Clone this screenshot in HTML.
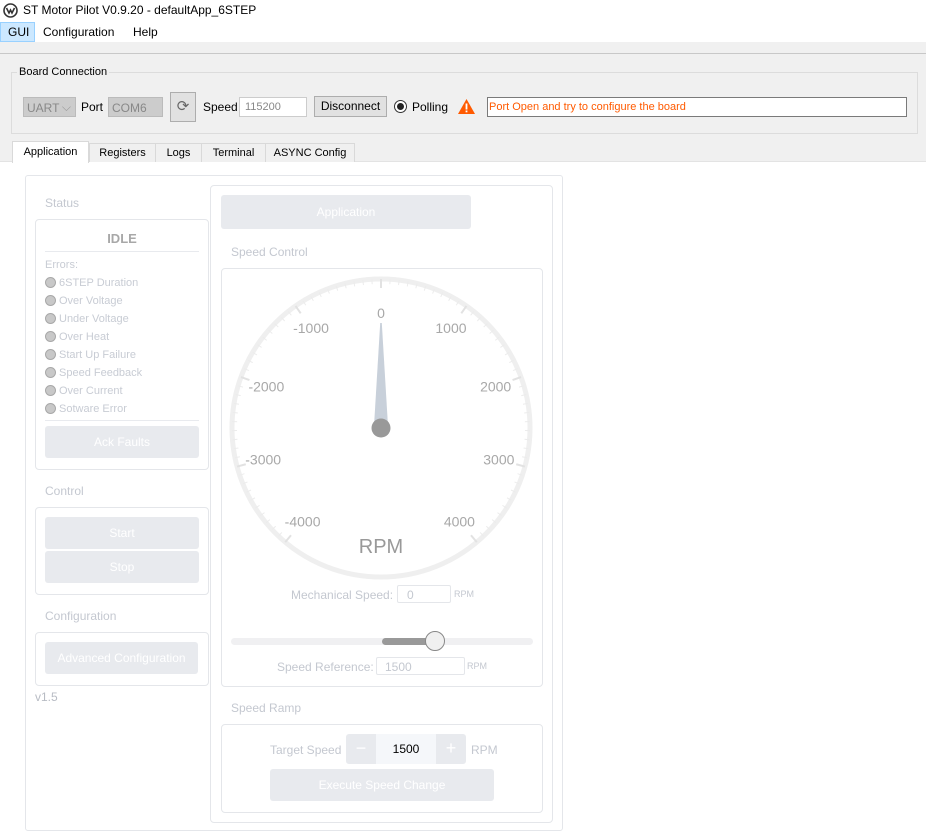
<!DOCTYPE html>
<html><head><meta charset="utf-8">
<style>
*{box-sizing:border-box;margin:0;padding:0}
body{width:926px;height:840px;position:relative;overflow:hidden;background:#f0f0f0;font-family:"Liberation Sans",sans-serif;font-size:12px;color:#000}
.a{position:absolute}
.btnf{position:absolute;background:#e8eaee;border-radius:3px;color:#fff;text-align:center;font-size:12px}
.box{position:absolute;border:1px solid #e4e6ea;border-radius:4px;background:#fff}
.lbl{position:absolute;color:#c4c8d0;font-size:12px}
.err{position:absolute;left:45px;color:#c8ccd4;font-size:11px}
.err i{display:inline-block;width:11px;height:11px;border-radius:50%;background:#c8c8c8;border:1px solid #a8a8a8;vertical-align:-2px;margin-right:3px}
.tab{position:absolute;top:143px;height:19px;border:1px solid #d9d9d9;border-bottom:none;background:#f0f0f0;font-size:11px;text-align:center;line-height:18px}
</style></head><body>
<div class="a" style="left:0;top:0;width:926px;height:22px;background:#fff"></div>
<svg class="a" style="left:3px;top:3px" width="15" height="15" viewBox="0 0 15 15"><circle cx="7.5" cy="7.5" r="6.5" fill="none" stroke="#333" stroke-width="1.6"/><path d="M3.5 5 L6 10 L7.5 7 L9 10 L11.5 5" fill="none" stroke="#333" stroke-width="1.6"/></svg>
<div class="a" style="left:23px;top:3px;font-size:12px">ST Motor Pilot V0.9.20 - defaultApp_6STEP</div>
<div class="a" style="left:0;top:22px;width:926px;height:20px;background:#fff"></div>
<div class="a" style="left:0;top:22px;width:35px;height:20px;background:#cce8ff;border:1px solid #99d1ff"></div>
<div class="a" style="left:8px;top:25px">GUI</div>
<div class="a" style="left:43px;top:25px">Configuration</div>
<div class="a" style="left:133px;top:25px">Help</div>
<div class="a" style="left:0;top:53px;width:926px;height:1px;background:#c8c8c8"></div>
<div class="a" style="left:11px;top:72px;width:907px;height:62px;border:1px solid #dcdcdc"></div>
<div class="a" style="left:17px;top:66px;background:#f0f0f0;padding:0 2px;font-size:11px">Board Connection</div>
<div class="a" style="left:23px;top:97px;width:53px;height:20px;background:#ccc;border:1px solid #bbb;color:#888;padding:3px 0 0 3px">UART <span style="position:absolute;right:4px;top:2px;color:#999">⌵</span></div>
<div class="a" style="left:81px;top:100px">Port</div>
<div class="a" style="left:108px;top:97px;width:55px;height:20px;background:#ccc;border:1px solid #bbb;color:#888;padding:3px 0 0 3px">COM6</div>
<div class="a" style="left:170px;top:92px;width:26px;height:30px;background:#e1e1e1;border:1px solid #adadad;color:#666;text-align:center;line-height:28px;font-size:15px">⟳</div>
<div class="a" style="left:203px;top:100px">Speed</div>
<div class="a" style="left:239px;top:97px;width:68px;height:20px;background:#fff;border:1px solid #ccc;color:#888;padding:3px 0 0 5px;font-size:11px">115200</div>
<div class="a" style="left:314px;top:96px;width:73px;height:21px;background:#e1e1e1;border:1px solid #adadad;text-align:center;line-height:19px">Disconnect</div>
<div class="a" style="left:394px;top:100px;width:13px;height:13px;border-radius:50%;border:1px solid #333;background:#fff"><div style="position:absolute;left:2px;top:2px;width:7px;height:7px;border-radius:50%;background:#222"></div></div>
<div class="a" style="left:412px;top:100px">Polling</div>
<svg class="a" style="left:458px;top:99px" width="17" height="15" viewBox="0 0 17 15"><path d="M8.5 0 L17 15 L0 15Z" fill="#ff5a00"/><rect x="7.6" y="4.5" width="1.8" height="6" fill="#fff"/><rect x="7.6" y="11.5" width="1.8" height="1.8" fill="#fff"/></svg>
<div class="a" style="left:487px;top:97px;width:420px;height:20px;background:#fff;border:1px solid #7a7a7a;color:#ff5a00;padding:3px 0 0 1px;font-size:11px">Port Open and try to configure the board</div>
<div class="a" style="left:0;top:161px;width:926px;height:679px;background:#fff;border-top:1px solid #e3e3e3"></div>
<div class="tab" style="left:12px;top:141px;width:77px;height:22px;background:#fff;line-height:20px">Application</div>
<div class="tab" style="left:89px;width:67px">Registers</div>
<div class="tab" style="left:155px;width:47px">Logs</div>
<div class="tab" style="left:201px;width:65px">Terminal</div>
<div class="tab" style="left:265px;width:90px">ASYNC Config</div>
<div class="a" style="left:25px;top:175px;width:538px;height:656px;border:1px solid #e4e6ea;border-radius:3px"></div>
<div class="lbl" style="left:45px;top:196px">Status</div>
<div class="box" style="left:35px;top:219px;width:174px;height:251px"></div>
<div class="a" style="left:45px;top:231px;width:154px;text-align:center;font-weight:bold;color:#a8a8a8;font-size:13px">IDLE</div>
<div class="a" style="left:45px;top:251px;width:154px;height:1px;background:#e8eaee"></div>
<div class="err" style="top:259px">Errors:</div>
<div class="err" style="top:277px"><i></i>6STEP Duration</div>
<div class="err" style="top:295px"><i></i>Over Voltage</div>
<div class="err" style="top:313px"><i></i>Under Voltage</div>
<div class="err" style="top:331px"><i></i>Over Heat</div>
<div class="err" style="top:349px"><i></i>Start Up Failure</div>
<div class="err" style="top:367px"><i></i>Speed Feedback</div>
<div class="err" style="top:385px"><i></i>Over Current</div>
<div class="err" style="top:403px"><i></i>Sotware Error</div>
<div class="a" style="left:45px;top:420px;width:154px;height:1px;background:#e8eaee"></div>
<div class="btnf" style="left:45px;top:426px;width:154px;height:32px;line-height:32px">Ack Faults</div>
<div class="lbl" style="left:45px;top:484px">Control</div>
<div class="box" style="left:35px;top:507px;width:174px;height:88px"></div>
<div class="btnf" style="left:45px;top:517px;width:154px;height:32px;line-height:32px">Start</div>
<div class="btnf" style="left:45px;top:551px;width:154px;height:32px;line-height:32px">Stop</div>
<div class="lbl" style="left:45px;top:609px">Configuration</div>
<div class="box" style="left:35px;top:632px;width:174px;height:54px"></div>
<div class="btnf" style="left:45px;top:642px;width:153px;height:32px;line-height:32px">Advanced Configuration</div>
<div class="lbl" style="left:35px;top:690px;color:#b8bcc4">v1.5</div>
<div class="box" style="left:210px;top:185px;width:343px;height:638px"></div>
<div class="btnf" style="left:221px;top:195px;width:250px;height:34px;line-height:34px">Application</div>
<div class="lbl" style="left:231px;top:245px">Speed Control</div>
<div class="box" style="left:221px;top:268px;width:322px;height:419px"></div>
<svg class="a" style="left:221px;top:268px" width="322" height="320">
<circle cx="160" cy="160" r="149" fill="none" stroke="#efefef" stroke-width="5"/>
<g id="ticks"></g>
<text x="160" y="285" text-anchor="middle" font-size="20" fill="#999" font-family="Liberation Sans">RPM</text>
<path d="M159.2 55 L160.8 55 L167 158 L153 158Z" fill="#c8d0da"/>
<circle cx="160" cy="160" r="9.5" fill="#999"/>
</svg>
<script>
var g=document.getElementById('ticks'),s='';
for(var v=-4000;v<=4000;v+=100){var a=(v/1000*35)*Math.PI/180,maj=v%1000==0;var r1=149,r2=maj?140:144;
s+='<line x1="'+(160+r1*Math.sin(a))+'" y1="'+(160-r1*Math.cos(a))+'" x2="'+(160+r2*Math.sin(a))+'" y2="'+(160-r2*Math.cos(a))+'" stroke="'+(maj?'#e2e2e2':'#ececec')+'" stroke-width="'+(maj?2:1)+'"/>';
if(maj){var rl=v==0?115:122;s+='<text x="'+(160+rl*Math.sin(a))+'" y="'+(160-rl*Math.cos(a)+5)+'" text-anchor="middle" font-size="14" fill="#a8a8a8" font-family="Liberation Sans">'+v+'</text>';}}
g.innerHTML=s;
</script>
<div class="lbl" style="left:291px;top:588px">Mechanical Speed:</div>
<div class="a" style="left:397px;top:585px;width:54px;height:18px;border:1px solid #e4e6ea;border-radius:2px;color:#c4c8d0;padding:2px 0 0 9px">0</div>
<div class="lbl" style="left:454px;top:589px;font-size:9px">RPM</div>
<div class="a" style="left:231px;top:638px;width:302px;height:7px;border-radius:4px;background:#f0f0f2"></div>
<div class="a" style="left:382px;top:638px;width:53px;height:7px;border-radius:4px;background:#999"></div>
<div class="a" style="left:425px;top:631px;width:20px;height:20px;border-radius:50%;background:#f0f0f0;border:1px solid #888"></div>
<div class="lbl" style="left:277px;top:660px">Speed Reference:</div>
<div class="a" style="left:376px;top:657px;width:89px;height:18px;border:1px solid #e4e6ea;border-radius:2px;color:#c4c8d0;padding:2px 0 0 8px">1500</div>
<div class="lbl" style="left:467px;top:661px;font-size:9px">RPM</div>
<div class="lbl" style="left:231px;top:701px">Speed Ramp</div>
<div class="box" style="left:221px;top:724px;width:322px;height:89px"></div>
<div class="lbl" style="left:270px;top:743px">Target Speed</div>
<div class="a" style="left:346px;top:734px;width:30px;height:30px;background:#e8eaee;border-radius:3px 0 0 3px;color:#fff;text-align:center;line-height:28px;font-size:18px">−</div>
<div class="a" style="left:376px;top:734px;width:60px;height:30px;background:#f5f7fa;text-align:center;line-height:30px;font-size:12px">1500</div>
<div class="a" style="left:436px;top:734px;width:30px;height:30px;background:#e8eaee;border-radius:0 3px 3px 0;color:#fff;text-align:center;line-height:28px;font-size:18px">+</div>
<div class="lbl" style="left:471px;top:743px">RPM</div>
<div class="btnf" style="left:270px;top:769px;width:224px;height:32px;line-height:32px">Execute Speed Change</div>
</body></html>
